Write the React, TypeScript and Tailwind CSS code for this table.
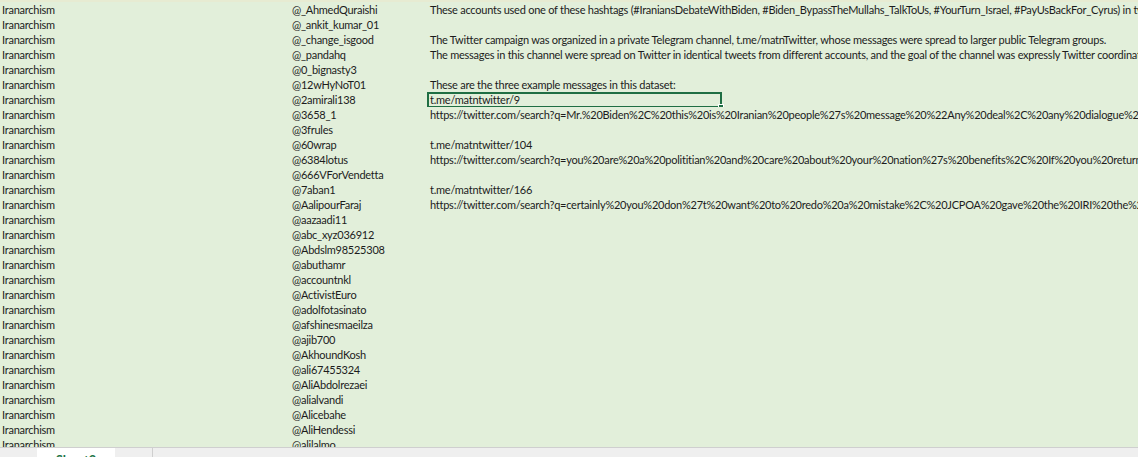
import React from "react";

const handles = [
  "@_AhmedQuraishi",
  "@_ankit_kumar_01",
  "@_change_isgood",
  "@_pandahq",
  "@0_bignasty3",
  "@12wHyNoT01",
  "@2amirali138",
  "@3658_1",
  "@3frules",
  "@60wrap",
  "@6384lotus",
  "@666VForVendetta",
  "@7aban1",
  "@AalipourFaraj",
  "@aazaadi11",
  "@abc_xyz036912",
  "@Abdslm98525308",
  "@abuthamr",
  "@accountnkl",
  "@ActivistEuro",
  "@adolfotasinato",
  "@afshinesmaeilza",
  "@ajib700",
  "@AkhoundKosh",
  "@ali67455324",
  "@AliAbdolrezaei",
  "@alialvandi",
  "@Alicebahe",
  "@AliHendessi",
  "@alilalmo",
];

const notes: Record<number, string> = {
  0: "These accounts used one of these hashtags (#IraniansDebateWithBiden, #Biden_BypassTheMullahs_TalkToUs, #YourTurn_Israel, #PayUsBackFor_Cyrus) in tweets between",
  2: "The Twitter campaign was organized in a private Telegram channel, t.me/matnTwitter, whose messages were spread to larger public Telegram groups.",
  3: "The messages in this channel were spread on Twitter in identical tweets from different accounts, and the goal of the channel was expressly Twitter coordination.",
  5: "These are the three example messages in this dataset:",
  6: "t.me/matntwitter/9",
  7: "https://twitter.com/search?q=Mr.%20Biden%2C%20this%20is%20Iranian%20people%27s%20message%20%22Any%20deal%2C%20any%20dialogue%20and%20any",
  9: "t.me/matntwitter/104",
  10: "https://twitter.com/search?q=you%20are%20a%20polititian%20and%20care%20about%20your%20nation%27s%20benefits%2C%20If%20you%20return%20to",
  12: "t.me/matntwitter/166",
  13: "https://twitter.com/search?q=certainly%20you%20don%27t%20want%20to%20redo%20a%20mistake%2C%20JCPOA%20gave%20the%20IRI%20the%20billions",
};

export default function App() {
  return (
    <div
      className="w-[1138px] h-[457px] overflow-hidden flex flex-col bg-[#e2efda] text-[#1c1c1c] text-[11px] tracking-[-0.25px]"
      style={{ fontFamily: "Lato, 'Liberation Sans', sans-serif" }}
    >
      <div className="h-[2px] shrink-0 bg-[#e7ebd2]" />

      {/* grid */}
      <div className="h-[445px] shrink-0 overflow-hidden">
        {handles.map((h, i) => (
          <div key={h} className="h-[15px] flex items-center leading-[15px]">
            <div className="w-[290px] shrink-0 pl-[2px] whitespace-nowrap overflow-hidden">Iranarchism</div>
            <div className="w-[137px] shrink-0 pl-[2px] whitespace-nowrap overflow-hidden">{h}</div>
            <div className="flex-1 min-w-0 relative h-full pl-[3px] whitespace-nowrap overflow-hidden">
              {notes[i] ?? ""}
              {i === 6 && (
                <div className="absolute left-0 top-0 w-[295px] h-[16px] border-2 border-[#1f6e43]">
                  <div className="absolute -right-[4px] -bottom-[4px] w-[6px] h-[6px] bg-[#1f6e43] border border-white" />
                </div>
              )}
            </div>
          </div>
        ))}
      </div>

      {/* sheet tabs */}
      <div className="flex-1 flex items-start bg-[#efefef] border-t border-[#cfcfcf] text-[13px] tracking-normal">
        <div className="w-[37px] flex justify-center pt-[4px] text-[#777]">‹</div>
        <div className="w-[78px] h-[24px] bg-white flex justify-center pt-[3px] font-bold text-[#217346]">Sheet2</div>
        <div className="w-[38px] h-[24px] flex justify-center pt-[1px] text-[#555] text-[16px] border-r border-[#cfcfcf]">+</div>
      </div>
    </div>
  );
}
